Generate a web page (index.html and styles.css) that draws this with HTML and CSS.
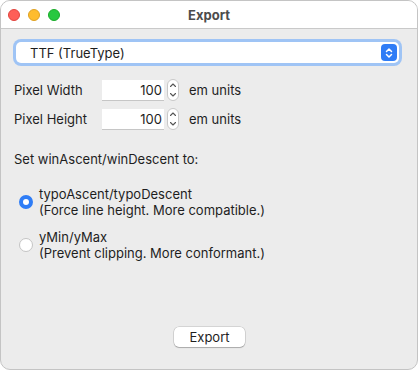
FILE: index.html
```html
<!DOCTYPE html>
<html lang="en">
<head>
    <meta charset="UTF-8">
    <title>Export</title>
    <link rel="stylesheet" href="styles.css">
</head>
<body>
    <div class="window">
        <div class="titlebar">
            <div class="lights">
                <span class="light red"></span>
                <span class="light yellow"></span>
                <span class="light green"></span>
            </div>
            <div class="title">Export</div>
        </div>

        <div class="content">
            <div class="select">
                <span class="select-text">TTF (TrueType)</span>
                <span class="select-btn">
                    <svg width="10" height="12" viewBox="0 0 10 12">
                        <path d="M2.5 4.5 L5 2 L7.5 4.5 M2.5 7.5 L5 10 L7.5 7.5" fill="none" stroke="#fff" stroke-width="1.5" stroke-linecap="round" stroke-linejoin="round"/>
                    </svg>
                </span>
            </div>

            <div class="fields">
                <div class="field-row">
                    <span class="field-label">Pixel Width</span>
                    <span class="num-input">100</span>
                    <span class="stepper">
                        <svg width="12" height="22" viewBox="0 0 12 22">
                            <rect x="0.5" y="0.5" width="11" height="21" rx="5.5" fill="#fff" stroke="#c8c8c8"/>
                            <path d="M3.5 7.5 L6 5 L8.5 7.5 M3.5 14.5 L6 17 L8.5 14.5" fill="none" stroke="#555" stroke-width="1.1" stroke-linecap="round" stroke-linejoin="round"/>
                        </svg>
                    </span>
                    <span class="unit">em units</span>
                </div>

                <div class="field-row">
                    <span class="field-label">Pixel Height</span>
                    <span class="num-input">100</span>
                    <span class="stepper">
                        <svg width="12" height="22" viewBox="0 0 12 22">
                            <rect x="0.5" y="0.5" width="11" height="21" rx="5.5" fill="#fff" stroke="#c8c8c8"/>
                            <path d="M3.5 7.5 L6 5 L8.5 7.5 M3.5 14.5 L6 17 L8.5 14.5" fill="none" stroke="#555" stroke-width="1.1" stroke-linecap="round" stroke-linejoin="round"/>
                        </svg>
                    </span>
                    <span class="unit">em units</span>
                </div>
            </div>

            <div class="group-label">Set winAscent/winDescent to:</div>

            <div class="radio-list">
                <div class="radio-item">
                    <span class="radio checked"></span>
                    <div class="radio-text">
                        <div>typoAscent/typoDescent</div>
                        <div>(Force line height. More compatible.)</div>
                    </div>
                </div>
                <div class="radio-item">
                    <span class="radio"></span>
                    <div class="radio-text">
                        <div>yMin/yMax</div>
                        <div>(Prevent clipping. More conformant.)</div>
                    </div>
                </div>
            </div>

            <div class="footer">
                <button class="btn">Export</button>
            </div>
        </div>
    </div>
</body>
</html>
```

FILE: styles.css
```css
html, body {
    margin: 0;
    padding: 0;
    background: #fff;
}

body {
    font-family: Inter, "Liberation Sans", sans-serif;
    font-size: 13px;
    color: #1e1e1e;
}

.window {
    width: 418px;
    height: 370px;
    box-sizing: border-box;
    background: #ececec;
    border-radius: 10px;
    border: 1px solid #c4c4c4;
    overflow: hidden;
    display: flex;
    flex-direction: column;
}

.titlebar {
    height: 27px;
    background: #fff;
    border-bottom: 1px solid #c9c9c9;
    display: flex;
    align-items: center;
    position: relative;
    flex-shrink: 0;
}

.lights {
    display: flex;
    gap: 8px;
    padding-left: 7px;
}

.light {
    width: 12px;
    height: 12px;
    border-radius: 50%;
    box-sizing: border-box;
}

.red { background: #fe5f57; border: 0.5px solid #e0443e; }
.yellow { background: #febc2e; border: 0.5px solid #dea123; }
.green { background: #28c840; border: 0.5px solid #1aab29; }

.title {
    position: absolute;
    left: 0;
    right: 0;
    top: 6px;
    text-align: center;
    font-weight: 700;
    color: #4c4c4c;
    font-size: 13px;
}

.content {
    flex: 1;
    padding: 13px 12px 0 12px;
    display: flex;
    flex-direction: column;
}

/* Popup */
.select {
    margin-left: 3px;
    width: 383px;
    height: 21px;
    box-sizing: border-box;
    background: #fff;
    border-radius: 5px;
    box-shadow: 0 0 0 3px #9fc4f5, 0 0 0 1px #8ab4ee;
    display: flex;
    align-items: center;
    justify-content: space-between;
}

.select-text {
    padding-left: 14px;
}

.select-btn {
    width: 16px;
    height: 17px;
    margin-right: 2px;
    background: #2e7cf6;
    border-radius: 4px;
    display: flex;
    align-items: center;
    justify-content: center;
}

.fields {
    margin-top: 16px;
    display: flex;
    flex-direction: column;
    gap: 7px;
}

.field-row {
    display: flex;
    align-items: center;
    height: 22px;
}

.field-label {
    width: 88px;
    padding-left: 1px;
}

.num-input {
    width: 62px;
    height: 21px;
    box-sizing: border-box;
    background: #fff;
    border-bottom: 1px solid #c6c6c6;
    text-align: right;
    padding-right: 2px;
    line-height: 21px;
}

.stepper {
    margin-left: 3px;
    display: flex;
}

.unit {
    margin-left: 10px;
}

.group-label {
    margin-top: 21px;
    padding-left: 1px;
}

.radio-list {
    margin-top: 19px;
    display: flex;
    flex-direction: column;
    gap: 11px;
}

.radio-item {
    display: flex;
    align-items: center;
    padding-left: 6px;
}

.radio {
    width: 14px;
    height: 14px;
    box-sizing: border-box;
    border-radius: 50%;
    background: #fff;
    border: 1px solid #c4c4c4;
    margin-right: 6px;
    flex-shrink: 0;
}

.radio.checked {
    background: #2f7df6;
    border: 4px solid #2f7df6;
    position: relative;
}

.radio.checked::after {
    content: "";
    position: absolute;
    left: 0;
    top: 0;
    width: 6px;
    height: 6px;
    border-radius: 50%;
    background: #fff;
}

.radio-text {
    line-height: 16px;
}

.footer {
    margin-top: auto;
    padding-bottom: 22px;
    display: flex;
    justify-content: center;
}

.btn {
    font-family: inherit;
    font-size: 13px;
    color: #1e1e1e;
    background: #fff;
    border: none;
    border-radius: 5px;
    box-shadow: 0 0 0 0.5px rgba(0, 0, 0, 0.2), 0 1px 1px rgba(0, 0, 0, 0.2);
    width: 71px;
    height: 20px;
    padding: 0;
    margin-left: 1px;
}
```
